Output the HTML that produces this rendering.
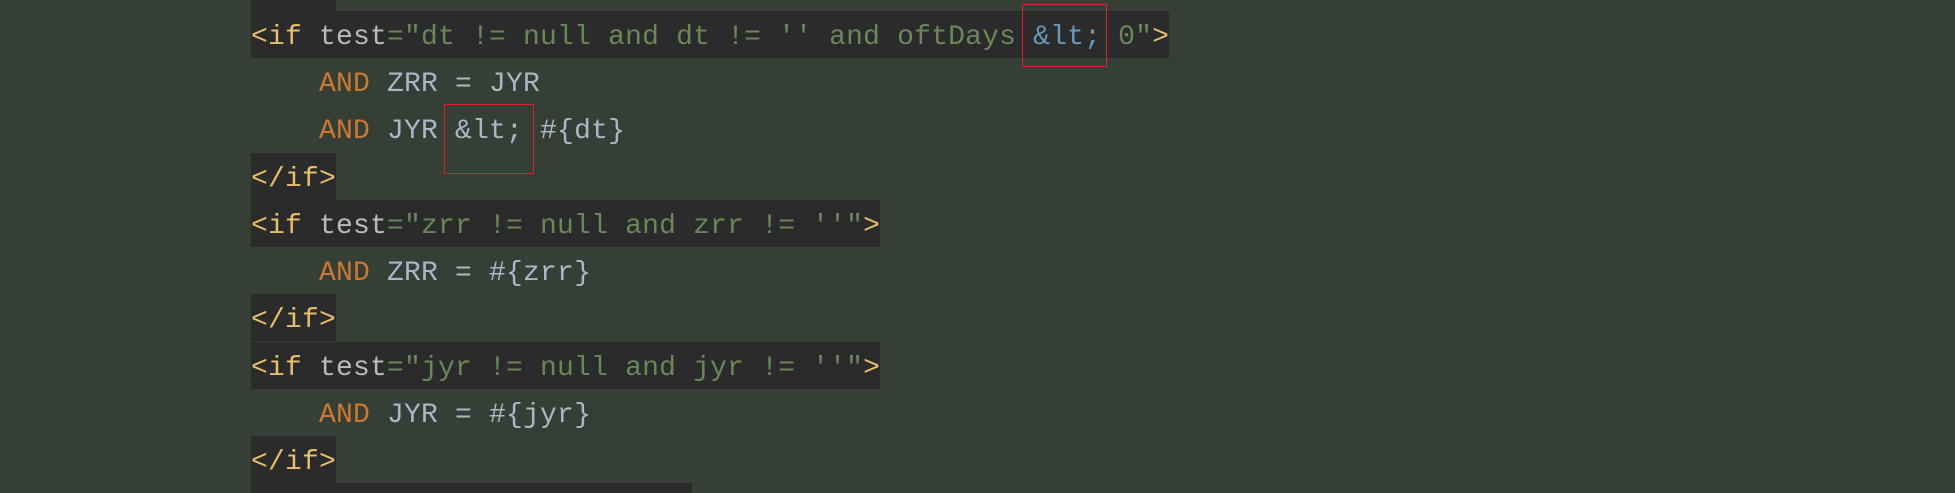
<!DOCTYPE html>
<html><head><meta charset="utf-8"><style>
html,body{margin:0;padding:0;width:1955px;height:487px;overflow:hidden;background:#363f35;}
.l{position:absolute;left:251px;height:47px;line-height:47px;font-family:"Liberation Mono",monospace;font-size:28px;letter-spacing:0.2px;white-space:pre;color:#a9b7c6;}
.l span.t{display:inline-block;height:47px;padding-top:3px;box-sizing:border-box;}
.hl{background:#2b2b2b;}
.tg{color:#e8bf6a}.at{color:#bababa}.s{color:#6a8759}.k{color:#cc7832}.e{color:#6897bb}
.box{position:absolute;border:1px solid #e0202a;}
</style></head><body>
<div class="l" style="top:-36px"><span class="t hl"><span class="tg">&lt;/if&gt;</span></span></div>
<div class="l" style="top:11px"><span class="t hl"><span class="tg">&lt;if </span><span class="at">test</span><span class="s">="dt != null and dt != '' and oftDays </span><span class="e">&amp;lt;</span><span class="s"> 0"</span><span class="tg">&gt;</span></span></div>
<div class="l" style="top:58px"><span class="t">    <span class="k">AND</span> ZRR = JYR</span></div>
<div class="l" style="top:105px"><span class="t">    <span class="k">AND</span> JYR &amp;lt; #{dt}</span></div>
<div class="l" style="top:153px"><span class="t hl"><span class="tg">&lt;/if&gt;</span></span></div>
<div class="l" style="top:200px"><span class="t hl"><span class="tg">&lt;if </span><span class="at">test</span><span class="s">="zrr != null and zrr != ''"</span><span class="tg">&gt;</span></span></div>
<div class="l" style="top:247px"><span class="t">    <span class="k">AND</span> ZRR = #{zrr}</span></div>
<div class="l" style="top:294px"><span class="t hl"><span class="tg">&lt;/if&gt;</span></span></div>
<div class="l" style="top:342px"><span class="t hl"><span class="tg">&lt;if </span><span class="at">test</span><span class="s">="jyr != null and jyr != ''"</span><span class="tg">&gt;</span></span></div>
<div class="l" style="top:389px"><span class="t">    <span class="k">AND</span> JYR = #{jyr}</span></div>
<div class="l" style="top:436px"><span class="t hl"><span class="tg">&lt;/if&gt;</span></span></div>
<div style="position:absolute;left:251px;top:483px;width:441px;height:10px;background:#2b2b2b"></div>
<div class="box" style="left:1022px;top:4px;width:83px;height:61px"></div>
<div class="box" style="left:444px;top:104px;width:88px;height:68px"></div>
</body></html>
